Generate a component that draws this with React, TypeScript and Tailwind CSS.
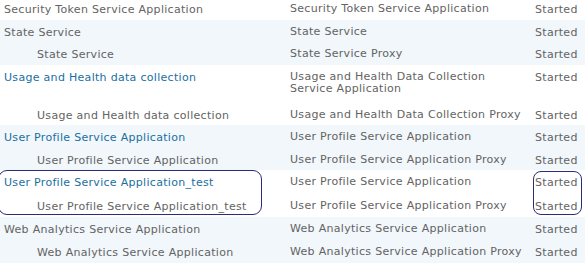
import React from "react";

type Row = { c1: string; link?: boolean; child?: boolean; c2: string[]; bg: boolean; h: number; pt?: number };

const rows: Row[] = [
  { c1: "Security Token Service Application", c2: ["Security Token Service Application"], bg: false, h: 20, pt: 3 },
  { c1: "State Service", c2: ["State Service"], bg: true, h: 22 },
  { c1: "State Service", child: true, c2: ["State Service Proxy"], bg: true, h: 23 },
  { c1: "Usage and Health data collection", link: true, c2: ["Usage and Health Data Collection", "Service Application"], bg: false, h: 38 },
  { c1: "Usage and Health data collection", child: true, c2: ["Usage and Health Data Collection Proxy"], bg: false, h: 22 },
  { c1: "User Profile Service Application", link: true, c2: ["User Profile Service Application"], bg: true, h: 23 },
  { c1: "User Profile Service Application", child: true, c2: ["User Profile Service Application Proxy"], bg: true, h: 22 },
  { c1: "User Profile Service Application_test", link: true, c2: ["User Profile Service Application"], bg: false, h: 24 },
  { c1: "User Profile Service Application_test", child: true, c2: ["User Profile Service Application Proxy"], bg: false, h: 23 },
  { c1: "Web Analytics Service Application", c2: ["Web Analytics Service Application"], bg: true, h: 23 },
  { c1: "Web Analytics Service Application", child: true, c2: ["Web Analytics Service Application Proxy"], bg: true, h: 23 },
];

export default function App() {
  return (
    <div
      className="relative w-[585px] h-[266px] bg-white overflow-hidden text-[11px] leading-[14px] tracking-[0.3px] text-[#636363]"
      style={{ fontFamily: '"DejaVu Sans", Verdana, sans-serif' }}
    >
      {rows.map((r, i) => (
        <div
          key={i}
          className={`flex ${r.bg ? "bg-[#f1f7fb]" : "bg-white"}`}
          style={{ height: r.h, paddingTop: r.pt ?? 6 }}
        >
          <div className={`w-[286px] shrink-0 ${r.child ? "pl-[37px]" : "pl-[4px]"} ${r.link ? "text-[#1a6fa0]" : ""}`}>
            {r.c1}
          </div>
          <div className="w-[245px] shrink-0 pl-[4px] leading-[12px]">
            {r.c2.map((t, j) => (
              <div key={j}>{t}</div>
            ))}
          </div>
          <div className="pl-[4px]">Started</div>
        </div>
      ))}
      <div className="absolute left-[-2px] top-[170px] w-[264px] h-[45px] border-[1.5px] border-[#2b2b78] rounded-[9px]" />
      <div className="absolute left-[533px] top-[171px] w-[49px] h-[44px] border-[1.5px] border-[#2b2b78] rounded-[8px]" />
    </div>
  );
}
